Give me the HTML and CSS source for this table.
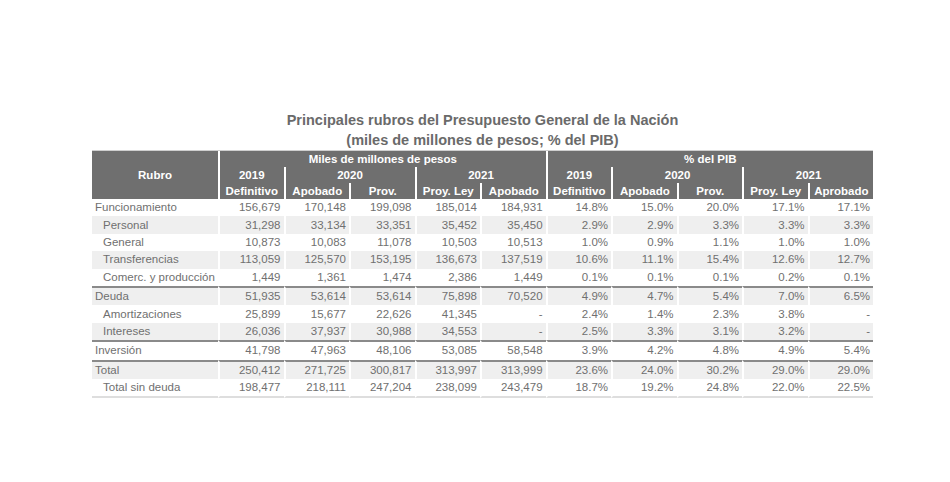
FILE: index.html
```html
<!DOCTYPE html>
<html lang="es">
<head>
<meta charset="utf-8">
<title>Principales rubros del Presupuesto General de la Nación</title>
<link rel="stylesheet" href="styles.css">
</head>
<body>
<div class="page">
  <div class="wrap">
    <h1 class="title">Principales rubros del Presupuesto General de la Nación<br>(miles de millones de pesos; % del PIB)</h1>
    <table class="budget">
      <colgroup>
        <col class="c-rubro">
        <col class="c-num"><col class="c-num"><col class="c-num"><col class="c-num"><col class="c-num">
        <col class="c-num"><col class="c-num"><col class="c-num"><col class="c-num"><col class="c-num">
      </colgroup>
      <thead>
        <tr class="h1">
          <th rowspan="3" class="rubro-h">Rubro</th>
          <th colspan="5" class="sep">Miles de millones de pesos</th>
          <th colspan="5" class="sep">% del PIB</th>
        </tr>
        <tr class="h2">
          <th class="sep">2019</th>
          <th colspan="2" class="sep">2020</th>
          <th colspan="2" class="sep">2021</th>
          <th class="sep">2019</th>
          <th colspan="2" class="sep">2020</th>
          <th colspan="2" class="sep">2021</th>
        </tr>
        <tr class="h3">
          <th class="sep">Definitivo</th>
          <th class="sep">Apobado</th>
          <th class="sep">Prov.</th>
          <th class="sep">Proy. Ley</th>
          <th class="sep">Apobado</th>
          <th class="sep">Definitivo</th>
          <th class="sep">Apobado</th>
          <th class="sep">Prov.</th>
          <th class="sep">Proy. Ley</th>
          <th class="sep">Aprobado</th>
        </tr>
      </thead>
      <tbody>
        <tr class="w"><td class="lbl">Funcionamiento</td><td>156,679</td><td>170,148</td><td>199,098</td><td>185,014</td><td>184,931</td><td>14.8%</td><td>15.0%</td><td>20.0%</td><td>17.1%</td><td>17.1%</td></tr>
        <tr class="g"><td class="lbl sub">Personal</td><td>31,298</td><td>33,134</td><td>33,351</td><td>35,452</td><td>35,450</td><td>2.9%</td><td>2.9%</td><td>3.3%</td><td>3.3%</td><td>3.3%</td></tr>
        <tr class="w"><td class="lbl sub">General</td><td>10,873</td><td>10,083</td><td>11,078</td><td>10,503</td><td>10,513</td><td>1.0%</td><td>0.9%</td><td>1.1%</td><td>1.0%</td><td>1.0%</td></tr>
        <tr class="g"><td class="lbl sub">Transferencias</td><td>113,059</td><td>125,570</td><td>153,195</td><td>136,673</td><td>137,519</td><td>10.6%</td><td>11.1%</td><td>15.4%</td><td>12.6%</td><td>12.7%</td></tr>
        <tr class="w"><td class="lbl sub">Comerc. y producción</td><td>1,449</td><td>1,361</td><td>1,474</td><td>2,386</td><td>1,449</td><td>0.1%</td><td>0.1%</td><td>0.1%</td><td>0.2%</td><td>0.1%</td></tr>
        <tr class="g top"><td class="lbl">Deuda</td><td>51,935</td><td>53,614</td><td>53,614</td><td>75,898</td><td>70,520</td><td>4.9%</td><td>4.7%</td><td>5.4%</td><td>7.0%</td><td>6.5%</td></tr>
        <tr class="w"><td class="lbl sub">Amortizaciones</td><td>25,899</td><td>15,677</td><td>22,626</td><td>41,345</td><td>-</td><td>2.4%</td><td>1.4%</td><td>2.3%</td><td>3.8%</td><td>-</td></tr>
        <tr class="g"><td class="lbl sub">Intereses</td><td>26,036</td><td>37,937</td><td>30,988</td><td>34,553</td><td>-</td><td>2.5%</td><td>3.3%</td><td>3.1%</td><td>3.2%</td><td>-</td></tr>
        <tr class="w top"><td class="lbl">Inversión</td><td>41,798</td><td>47,963</td><td>48,106</td><td>53,085</td><td>58,548</td><td>3.9%</td><td>4.2%</td><td>4.8%</td><td>4.9%</td><td>5.4%</td></tr>
        <tr class="g top"><td class="lbl">Total</td><td>250,412</td><td>271,725</td><td>300,817</td><td>313,997</td><td>313,999</td><td>23.6%</td><td>24.0%</td><td>30.2%</td><td>29.0%</td><td>29.0%</td></tr>
        <tr class="w last"><td class="lbl sub">Total sin deuda</td><td>198,477</td><td>218,111</td><td>247,204</td><td>238,099</td><td>243,479</td><td>18.7%</td><td>19.2%</td><td>24.8%</td><td>22.0%</td><td>22.5%</td></tr>
      </tbody>
    </table>
  </div>
</div>
</body>
</html>
```

FILE: styles.css
```css
html, body {
  margin: 0;
  padding: 0;
  background: #ffffff;
}

.page {
  padding: 111px 0 0 92px;
  font-family: "Liberation Sans", Arial, sans-serif;
}

.wrap {
  width: 781px;
}

.title {
  margin: 0;
  font-size: 14.5px;
  line-height: 19.5px;
  font-weight: bold;
  color: #6a6a6a;
  text-align: center;
}

.budget {
  width: 781px;
  table-layout: fixed;
  border-collapse: separate;
  border-spacing: 0;
  border-top: 1px solid #cfcfcf;
}

.c-rubro { width: 126px; }
.c-num { width: 65.5px; }

.budget th {
  background: #6f6f6f;
  color: #ffffff;
  font-size: 11.5px;
  font-weight: bold;
  height: 16px;
  padding: 0;
  line-height: 16px;
  text-align: center;
  white-space: nowrap;
}

.budget th.sep {
  border-left: 2px solid #ffffff;
}

.budget td {
  font-size: 11.5px;
  color: #707070;
  height: 17.4px;
  line-height: 17px;
  padding: 0 3px 0 0;
  text-align: right;
  white-space: nowrap;
  border-left: 2px solid #ffffff;
}

.budget td.lbl {
  text-align: left;
  padding: 0 0 0 3px;
  border-left: 0;
}

.budget td.sub {
  padding-left: 11px;
}

.budget tr.g td {
  background: #efefef;
}

.budget tr.w td {
  background: #ffffff;
}

.budget tr.top td {
  border-top: 2px solid #8a8a8a;
}

.budget tr.last td {
  border-bottom: 2px solid #dedede;
}
```
